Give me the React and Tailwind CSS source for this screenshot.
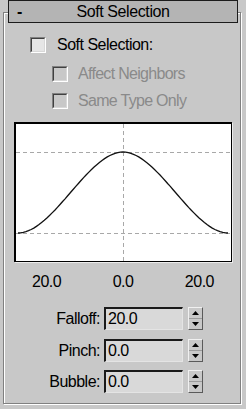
import React from "react";

const font = { fontFamily: '"Liberation Sans", Arial, sans-serif' };

const Checkbox = ({ disabled }) => (
  <div
    className={`w-[16px] h-[16px] border border-t-[#808080] border-l-[#808080] border-r-white border-b-white ${
      disabled ? "bg-[#c8c8c8]" : "bg-[#e6e6e6]"
    }`}
  >
    <div className="w-full h-full border border-t-[#404040] border-l-[#404040] border-r-[#d8d8d8] border-b-[#d8d8d8]" />
  </div>
);

const Spinner = () => (
  <div className="w-[15px] h-[23px] flex flex-col bg-[#c8c8c8] border border-t-[#f0f0f0] border-l-[#f0f0f0] border-r-[#5a5a5a] border-b-[#5a5a5a]">
    <div className="flex-1 flex items-center justify-center border-b border-[#9a9a9a]">
      <svg width="7" height="4" viewBox="0 0 7 4">
        <path d="M3.5 0 L7 4 L0 4 Z" fill="#000" />
      </svg>
    </div>
    <div className="flex-1 flex items-center justify-center">
      <svg width="7" height="4" viewBox="0 0 7 4">
        <path d="M0 0 L7 0 L3.5 4 Z" fill="#000" />
      </svg>
    </div>
  </div>
);

const SpinRow = ({ label, value, className }) => (
  <div className={`flex items-center h-[23px] ${className}`}>
    <div className="w-[96px] text-right text-[16px] tracking-[-0.5px] text-black leading-none">{label}</div>
    <div className="ml-[4px] w-[79px] h-[23px] bg-[#d9d9d9] border-t-2 border-l-2 border-r border-b border-t-[#1a1a1a] border-l-[#1a1a1a] border-r-[#e4e4e4] border-b-[#e4e4e4] flex items-center pl-[2px] text-[16px] tracking-[-0.5px] text-black leading-none">
      {value}
    </div>
    <div className="ml-[5px]">
      <Spinner />
    </div>
  </div>
);

const Curve = () => {
  const cx = 107;
  const half = 105;
  const base = 109;
  const peak = 28;
  const pts = [];
  for (let i = 0; i <= 80; i++) {
    const x = cx - half + (i / 80) * half * 2;
    const t = Math.min(1, Math.abs(x - cx) / half);
    const y = 1 - (3 * t * t - 2 * t * t * t);
    pts.push(`${x.toFixed(1)},${(base - y * (base - peak)).toFixed(1)}`);
  }
  return (
    <svg width="214" height="137" viewBox="0 0 214 137" className="block">
      <line x1="0" y1="28.5" x2="214" y2="28.5" stroke="#a8a8a8" strokeDasharray="4 3" />
      <line x1="0" y1="109.5" x2="214" y2="109.5" stroke="#a8a8a8" strokeDasharray="4 3" />
      <line x1="107.5" y1="0" x2="107.5" y2="137" stroke="#a8a8a8" strokeDasharray="4 3" />
      <polyline points={pts.join(" ")} fill="none" stroke="#111" strokeWidth="1.3" />
    </svg>
  );
};

export default function App() {
  return (
    <div className="w-[246px] h-[409px] bg-[#c8c8c8] pt-[12px] overflow-hidden" style={font}>
      <div className="ml-[3px] w-[238px] h-[392px] border border-[#808080] shadow-[inset_1px_1px_0_#fff,1px_1px_0_#fff] flex flex-col">
        <div className="-mt-[13px] ml-[4px] w-[230px] h-[23px] bg-[#b4b4b4] border border-[#1c1c1c] flex items-center text-[16px] tracking-[-0.4px] text-black leading-none">
          <div className="w-[30px] pl-[8px] font-bold">-</div>
          <div className="flex-1 text-center">Soft Selection</div>
          <div className="w-[30px]" />
        </div>

        <div className="mt-[14px] ml-[26px] flex items-center h-[16px]">
          <Checkbox />
          <span className="ml-[11px] text-[16px] tracking-[-0.5px] text-black leading-none">Soft Selection:</span>
        </div>
        <div className="mt-[13px] ml-[48px] flex items-center h-[16px]">
          <Checkbox disabled />
          <span className="ml-[10px] text-[16px] tracking-[-0.7px] text-[#8a8a8a] leading-none">Affect Neighbors</span>
        </div>
        <div className="mt-[11px] ml-[48px] flex items-center h-[16px]">
          <Checkbox disabled />
          <span className="ml-[10px] text-[16px] tracking-[-0.7px] text-[#8a8a8a] leading-none">Same Type Only</span>
        </div>

        <div className="mt-[13px] ml-[10px] w-[218px] h-[140px] bg-white border-t-2 border-l-2 border-r border-b border-black shadow-[1px_1px_0_#ececec]">
          <Curve />
        </div>

        <div className="mt-[12px] ml-[10px] w-[218px] px-[18px] flex justify-between text-[16px] tracking-[-0.5px] text-black leading-none">
          <span>20.0</span>
          <span>0.0</span>
          <span>20.0</span>
        </div>

        <SpinRow label="Falloff:" value="20.0" className="mt-[17px]" />
        <SpinRow label="Pinch:" value="0.0" className="mt-[9px]" />
        <SpinRow label="Bubble:" value="0.0" className="mt-[8px]" />
      </div>
    </div>
  );
}
